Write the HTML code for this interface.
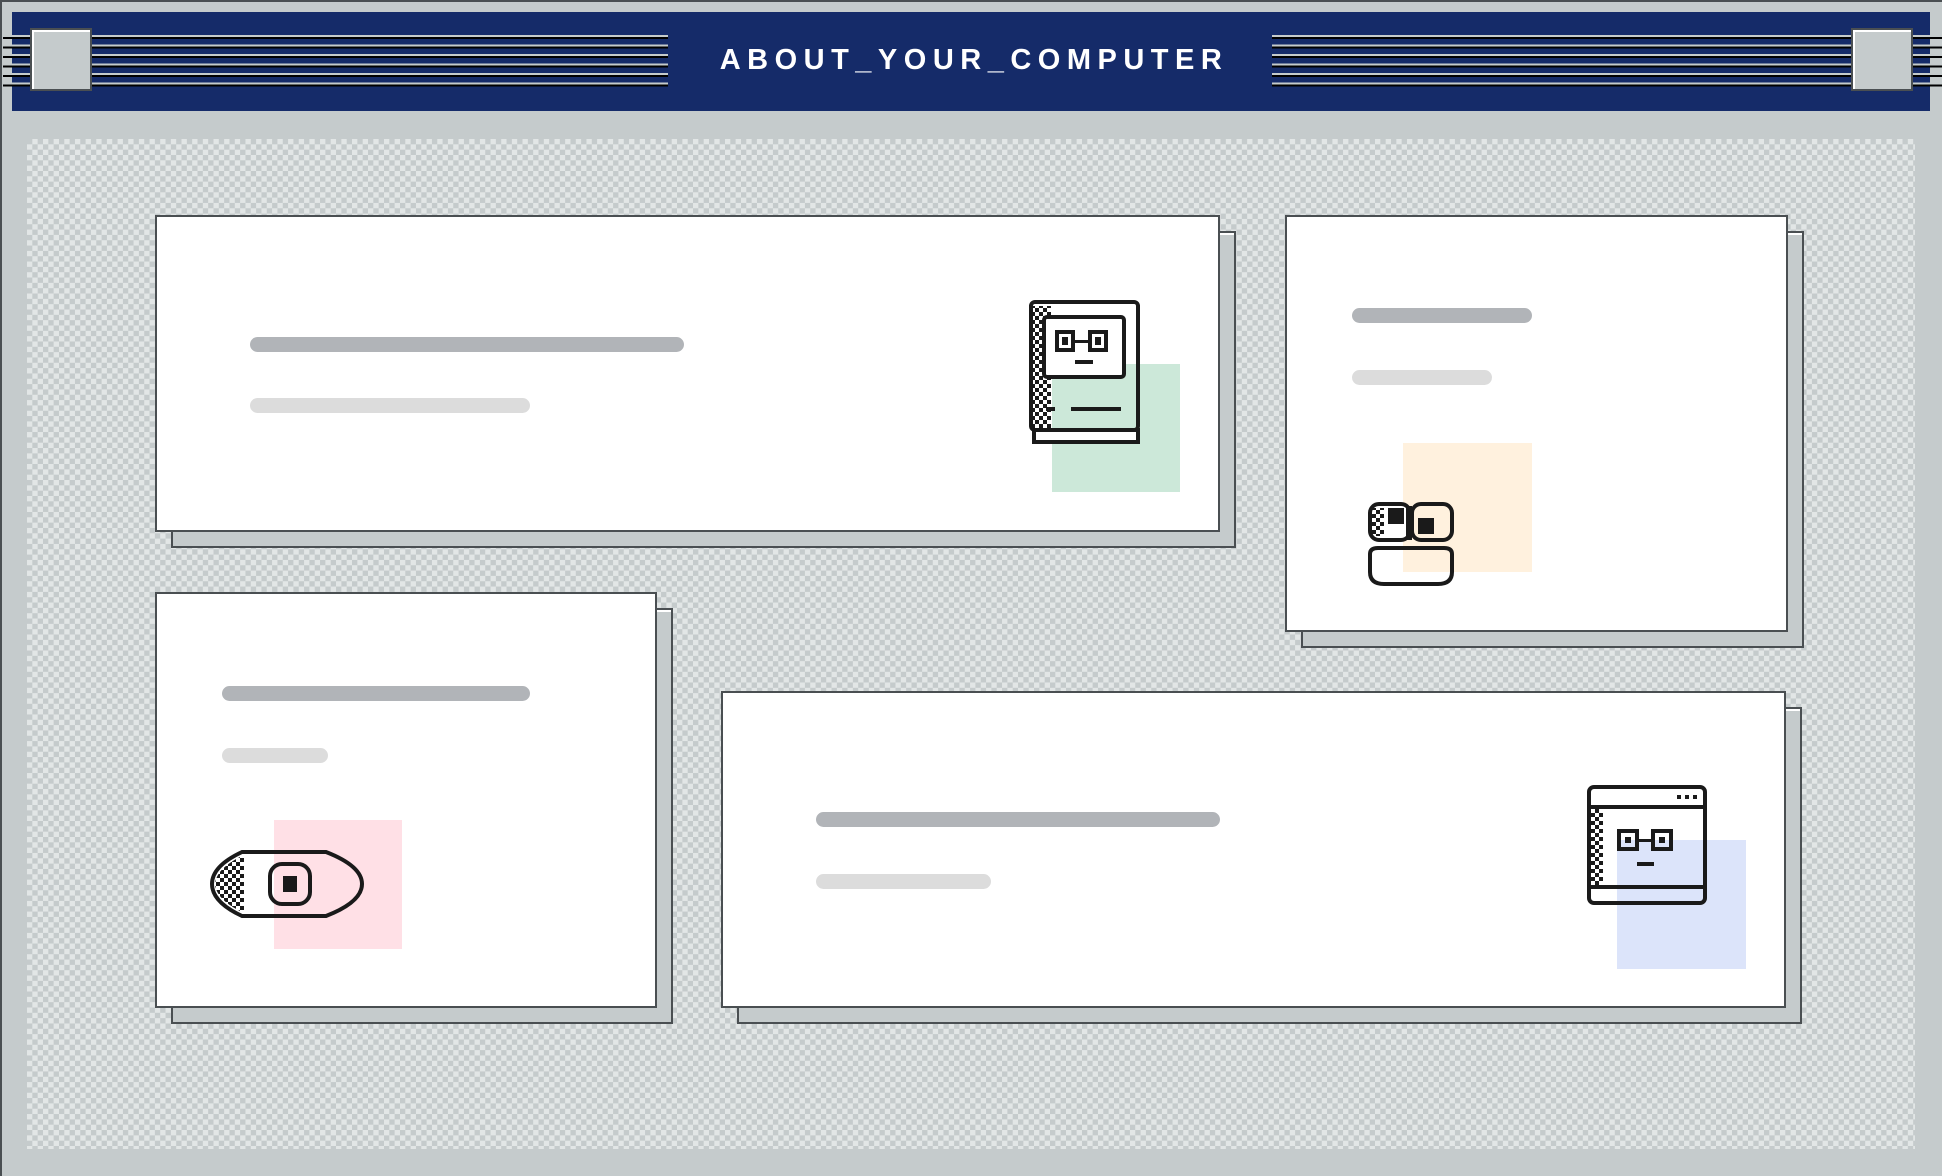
<!DOCTYPE html>
<html><head><meta charset="utf-8"><style>
*{margin:0;padding:0;box-sizing:border-box}
html,body{width:1942px;height:1176px;overflow:hidden;background:#c5cbcc}
.frame{position:absolute;left:0;top:0;width:1942px;height:1176px;border:2px solid #4a4f52;border-right:none;border-bottom:none;background:#c5cbcc}
.bar{position:absolute;left:12px;top:12px;width:1918px;height:99px;background:#152b69}
.lines{position:absolute;height:54px;top:35px;background:repeating-linear-gradient(to bottom,#c5cbcc 0,#c5cbcc 2px,#000 2px,#000 4px,transparent 4px,transparent 9.5px)}
.btn{position:absolute;top:28px;width:62px;height:63px;background:#c5cbcc;border:2px solid #4a4f52;box-shadow:inset 2px 2px 0 #fff}
.title{position:absolute;left:0;top:44px;width:1942px;text-align:center;color:#fff;font:bold 29px "Liberation Sans",sans-serif;letter-spacing:6.5px;padding-left:6px}
.check{position:absolute;left:27px;top:139px;width:1888px;height:1010px;background:repeating-conic-gradient(#e2e6e6 0 25%,#c5cbcc 0 50%) 0 0/10.66px 10.66px}
.sh{position:absolute;background:#c5cbcc;border:2px solid #4a4f52;box-shadow:inset 0 2px 0 #fff}
.card{position:absolute;background:#fff;border:2px solid #4a4f52}
.b{position:absolute;border-radius:8px;height:15px}
.d{background:#b1b4b8}.l{background:#dcdcdc}
.sq{position:absolute}
svg{position:absolute;overflow:visible}
</style></head><body>
<div class="frame"></div>
<div class="bar"></div>
<div class="lines" style="left:3px;width:665px"></div>
<div class="lines" style="left:1272px;width:670px"></div>
<div class="btn" style="left:30px"></div>
<div class="btn" style="left:1851px"></div>
<div class="title">ABOUT_YOUR_COMPUTER</div>
<div class="check"></div>

<div class="sh" style="left:171px;top:231px;width:1065px;height:317px"></div>
<div class="card" style="left:155px;top:215px;width:1065px;height:317px"></div>
<div class="sh" style="left:1301px;top:231px;width:503px;height:417px"></div>
<div class="card" style="left:1285px;top:215px;width:503px;height:417px"></div>
<div class="sh" style="left:171px;top:608px;width:502px;height:416px"></div>
<div class="card" style="left:155px;top:592px;width:502px;height:416px"></div>
<div class="sh" style="left:737px;top:707px;width:1065px;height:317px"></div>
<div class="card" style="left:721px;top:691px;width:1065px;height:317px"></div>

<div class="b d" style="left:250px;top:337px;width:434px"></div>
<div class="b l" style="left:250px;top:398px;width:280px"></div>
<div class="b d" style="left:1352px;top:308px;width:180px"></div>
<div class="b l" style="left:1352px;top:370px;width:140px"></div>
<div class="b d" style="left:222px;top:686px;width:308px"></div>
<div class="b l" style="left:222px;top:748px;width:106px"></div>
<div class="b d" style="left:816px;top:812px;width:404px"></div>
<div class="b l" style="left:816px;top:874px;width:175px"></div>

<div class="sq" style="left:1052px;top:364px;width:128px;height:128px;background:#cce8d9"></div>
<div class="sq" style="left:1403px;top:443px;width:129px;height:129px;background:#fff1de"></div>
<div class="sq" style="left:274px;top:820px;width:128px;height:129px;background:#ffe0e6"></div>
<div class="sq" style="left:1617px;top:840px;width:129px;height:129px;background:#dce4fa"></div>

<svg width="0" height="0"><defs>
<pattern id="ck" width="8" height="8" patternUnits="userSpaceOnUse"><rect width="4" height="4" fill="#1a1a1a"/><rect x="4" y="4" width="4" height="4" fill="#1a1a1a"/></pattern>
</defs></svg>

<!-- book -->
<svg style="left:1027px;top:300px" width="115" height="146" viewBox="0 0 115 146">
<rect x="4" y="2" width="107" height="128" rx="4" fill="none" stroke="#1a1a1a" stroke-width="4"/>
<rect x="4" y="6" width="20" height="122" fill="url(#ck)"/>
<rect x="17" y="17" width="80" height="60" rx="3" fill="#fff" stroke="#1a1a1a" stroke-width="4"/>
<rect x="30" y="32" width="16" height="18" fill="none" stroke="#1a1a1a" stroke-width="4"/>
<rect x="63" y="32" width="16" height="18" fill="none" stroke="#1a1a1a" stroke-width="4"/>
<rect x="35" y="37" width="6" height="8" fill="#1a1a1a"/><rect x="68" y="37" width="6" height="8" fill="#1a1a1a"/>
<rect x="46" y="40" width="17" height="3" fill="#1a1a1a"/>
<rect x="48" y="60" width="18" height="4" fill="#1a1a1a"/>
<rect x="19" y="107" width="9" height="4" fill="#1a1a1a"/>
<rect x="44" y="107" width="50" height="4" fill="#1a1a1a"/>
<rect x="7" y="130" width="104" height="12" fill="#fff" stroke="#1a1a1a" stroke-width="4"/>
</svg>

<!-- eyes -->
<svg style="left:1368px;top:502px" width="86" height="86" viewBox="0 0 86 86">
<rect x="2" y="2" width="40" height="36" rx="9" fill="#fff" stroke="#1a1a1a" stroke-width="4"/>
<rect x="4" y="6" width="12" height="28" fill="url(#ck)"/>
<rect x="44" y="2" width="40" height="36" rx="9" fill="none" stroke="#1a1a1a" stroke-width="4"/>
<rect x="20" y="6" width="16" height="16" fill="#1a1a1a"/>
<rect x="50" y="16" width="16" height="16" fill="#1a1a1a"/>
<rect x="38" y="4" width="6" height="34" fill="#1a1a1a"/>
<path d="M2 52 Q2 46 10 46 H76 Q84 46 84 52 V70 Q84 82 70 82 H16 Q2 82 2 70 Z" fill="none" stroke="#1a1a1a" stroke-width="4"/>
</svg>

<!-- eye -->
<svg style="left:208px;top:850px" width="158" height="68" viewBox="0 0 158 68">
<path d="M34 2 H118 Q154 16 154 34 Q154 52 118 66 H34 Q4 52 4 34 Q4 16 34 2 Z" fill="none" stroke="#1a1a1a" stroke-width="4"/>
<path d="M36 5 Q8 18 7 34 Q8 50 36 63 Z" fill="url(#ck)"/>
<rect x="62" y="14" width="40" height="40" rx="12" fill="none" stroke="#1a1a1a" stroke-width="4"/>
<rect x="75" y="26" width="14" height="16" fill="#1a1a1a"/>
</svg>

<!-- window -->
<svg style="left:1587px;top:785px" width="122" height="122" viewBox="0 0 122 122">
<rect x="2" y="2" width="116" height="116" rx="5" fill="none" stroke="#1a1a1a" stroke-width="4"/>
<rect x="2" y="20" width="116" height="4" fill="#1a1a1a"/>
<rect x="2" y="100" width="116" height="4" fill="#1a1a1a"/>
<rect x="90" y="10" width="4" height="4" fill="#1a1a1a"/><rect x="98" y="10" width="4" height="4" fill="#1a1a1a"/><rect x="106" y="10" width="4" height="4" fill="#1a1a1a"/>
<rect x="4" y="24" width="12" height="76" fill="url(#ck)"/>
<rect x="32" y="46" width="18" height="18" fill="none" stroke="#1a1a1a" stroke-width="4"/>
<rect x="66" y="46" width="18" height="18" fill="none" stroke="#1a1a1a" stroke-width="4"/>
<rect x="38" y="52" width="6" height="6" fill="#1a1a1a"/><rect x="72" y="52" width="6" height="6" fill="#1a1a1a"/>
<rect x="50" y="54" width="16" height="3" fill="#1a1a1a"/>
<rect x="50" y="77" width="17" height="4" fill="#1a1a1a"/>
</svg>
</body></html>
